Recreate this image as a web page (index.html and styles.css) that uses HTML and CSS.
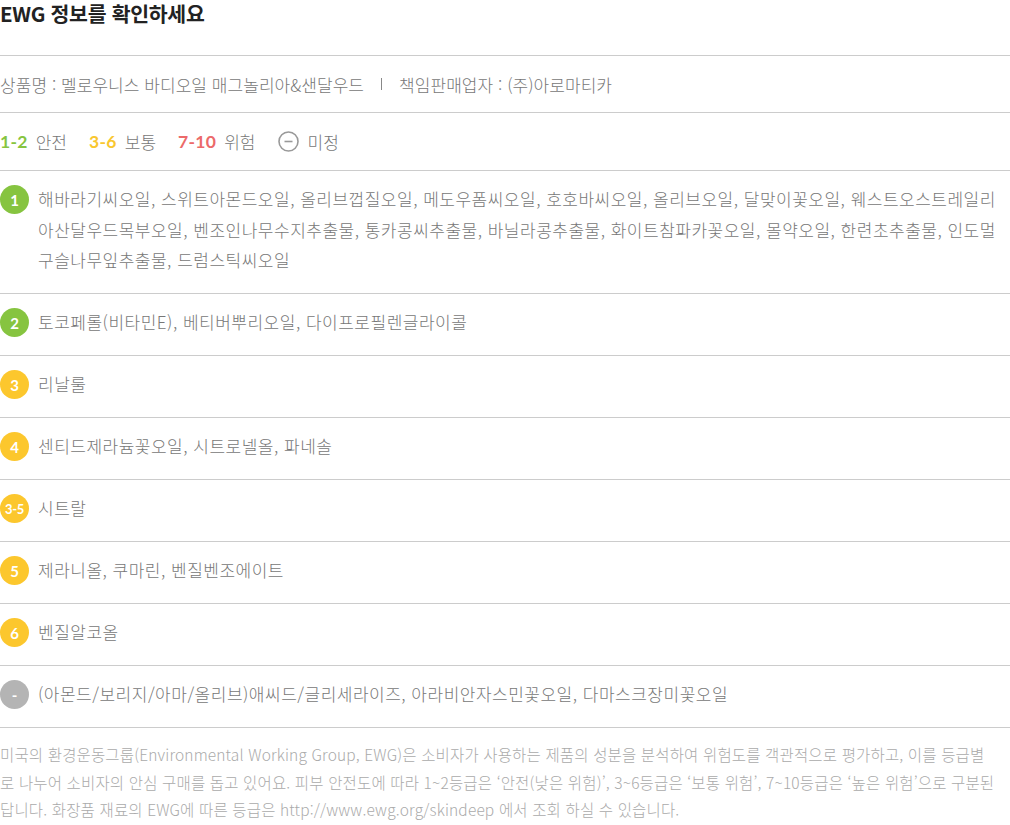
FILE: index.html
```html
<!DOCTYPE html>
<html lang="ko">
<head>
<meta charset="utf-8">
<title>EWG 정보</title>
<link rel="stylesheet" href="styles.css">
</head>
<body>
<div class="ewg">
  <h2 class="title">EWG 정보를 확인하세요</h2>
  <div class="info">상품명 : 멜로우니스 바디오일 매그놀리아&amp;샌달우드<span class="sep"></span>책임판매업자 : (주)아로마티카</div>
  <div class="legend">
    <span class="num green">1-2</span><span class="lab">안전</span>
    <span class="num yellow">3-6</span><span class="lab">보통</span>
    <span class="num red">7-10</span><span class="lab">위험</span>
    <svg class="minus" width="21" height="21" viewBox="0 0 21 21"><circle cx="10.5" cy="10.5" r="9.5" fill="none" stroke="#999" stroke-width="1.6"/><line x1="6.5" y1="10.5" x2="14.5" y2="10.5" stroke="#999" stroke-width="1.6"/></svg><span class="lab">미정</span>
  </div>
  <ul class="list">
    <li class="row"><span class="badge green-bg">1</span><p class="txt">해바라기씨오일, 스위트아몬드오일, 올리브껍질오일, 메도우폼씨오일, 호호바씨오일, 올리브오일, 달맞이꽃오일, 웨스트오스트레일리아산달우드목부오일, 벤조인나무수지추출물, 통카콩씨추출물, 바닐라콩추출물, 화이트참파카꽃오일, 몰약오일, 한련초추출물, 인도멀구슬나무잎추출물, 드럼스틱씨오일</p></li>
    <li class="row"><span class="badge green-bg">2</span><p class="txt">토코페롤(비타민E), 베티버뿌리오일, 다이프로필렌글라이콜</p></li>
    <li class="row"><span class="badge yellow-bg">3</span><p class="txt">리날룰</p></li>
    <li class="row"><span class="badge yellow-bg">4</span><p class="txt">센티드제라늄꽃오일, 시트로넬올, 파네솔</p></li>
    <li class="row"><span class="badge yellow-bg small">3-5</span><p class="txt">시트랄</p></li>
    <li class="row"><span class="badge yellow-bg">5</span><p class="txt">제라니올, 쿠마린, 벤질벤조에이트</p></li>
    <li class="row"><span class="badge yellow-bg">6</span><p class="txt">벤질알코올</p></li>
    <li class="row"><span class="badge gray-bg">-</span><p class="txt">(아몬드/보리지/아마/올리브)애씨드/글리세라이즈, 아라비안자스민꽃오일, 다마스크장미꽃오일</p></li>
  </ul>
  <p class="note">미국의 환경운동그룹(Environmental Working Group, EWG)은 소비자가 사용하는 제품의 성분을 분석하여 위험도를 객관적으로 평가하고, 이를 등급별로 나누어 소비자의 안심 구매를 돕고 있어요. 피부 안전도에 따라 1~2등급은 ‘안전(낮은 위험)’, 3~6등급은 ‘보통 위험’, 7~10등급은 ‘높은 위험’으로 구분된답니다. 화장품 재료의 EWG에 따른 등급은 http://www.ewg.org/skindeep 에서 조회 하실 수 있습니다.</p>
</div>
</body>
</html>
```

FILE: styles.css
```css
* { box-sizing: border-box; }
html, body { margin: 0; padding: 0; background: #fff; }
body {
  font-family: "Noto Sans CJK KR", "Noto Sans", sans-serif;
  color: #777;
  width: 1010px;
}
.ewg { width: 1010px; }
.title {
  margin: 0;
  height: 55px;
  padding-top: 1px;
  font-size: 20.5px;
  line-height: 24px;
  font-weight: 700;
  color: #222;
  letter-spacing: -0.3px;
}
.info {
  border-top: 1px solid #ccc;
  height: 57px;
  display: flex;
  align-items: center;
  font-size: 17px;
  font-weight: 300;
  color: #777;
  letter-spacing: 0.05px;
}
.sep {
  display: inline-block;
  width: 1px;
  height: 12px;
  background: #888;
  margin: 0 17px 0 17px;
}
.legend {
  border-top: 1px solid #ccc;
  height: 58px;
  display: flex;
  align-items: center;
  font-size: 17px;
}
.num {
  font-family: "Lato", "Noto Sans", sans-serif;
  font-weight: 700;
  font-size: 17.5px;
  margin-right: 8px;
  letter-spacing: 0.3px;
}
.lab { font-weight: 300; color: #777; margin-right: 22px; }
.minus { margin-right: 9px; }
.green { color: #86c440; }
.yellow { color: #f9c72f; }
.red { color: #ec6a6a; }
.list { list-style: none; margin: 0; padding: 0; }
.row {
  border-top: 1px solid #ccc;
  display: flex;
  align-items: flex-start;
  padding: 13px 0 17.5px;
}
.badge {
  flex: none;
  width: 29px;
  height: 29px;
  border-radius: 50%;
  margin-top: 1px;
  margin-right: 9px;
  color: #fff;
  font-family: "Lato", "Noto Sans", sans-serif;
  font-weight: 700;
  font-size: 15px;
  display: flex;
  align-items: center;
  justify-content: center;
}
.badge.small { font-size: 13px; letter-spacing: -0.3px; }
.green-bg { background: #86c440; }
.yellow-bg { background: #fcc72d; }
.gray-bg { background: #b4b4b4; }
.txt {
  margin: 0;
  font-size: 17px;
  line-height: 30.5px;
  font-weight: 300;
  color: #777;
  letter-spacing: 0.5px;
  flex: 1;
  padding-right: 12px;
}
.note {
  border-top: 1px solid #ccc;
  margin: 0;
  padding-top: 13px;
  font-size: 15.5px;
  line-height: 27.5px;
  font-weight: 300;
  color: #aaa;
  letter-spacing: 0.15px;
  padding-right: 12px;
}
```
